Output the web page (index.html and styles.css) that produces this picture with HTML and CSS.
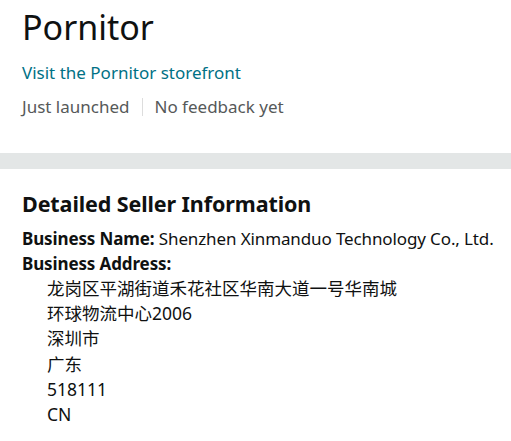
FILE: index.html
```html
<!DOCTYPE html>
<html>
<head>
<meta charset="utf-8">
<link rel="stylesheet" href="styles.css">
</head>
<body>
<section class="top">
  <h1 class="title">Pornitor</h1>
  <a class="store-link" href="#">Visit the Pornitor storefront</a>
  <div class="meta">
    <span>Just launched</span>
    <span class="sep"></span>
    <span>No feedback yet</span>
  </div>
</section>
<div class="band"></div>
<section class="details">
  <h2 class="heading">Detailed Seller Information</h2>
  <div class="row"><b>Business Name:</b> Shenzhen Xinmanduo Technology Co., Ltd.</div>
  <div class="row"><b>Business Address:</b></div>
  <div class="address">
    <div>龙岗区平湖街道禾花社区华南大道一号华南城</div>
    <div>环球物流中心2006</div>
    <div>深圳市</div>
    <div>广东</div>
    <div>518111</div>
    <div>CN</div>
  </div>
</section>
</body>
</html>
```
FILE: styles.css
```css
html, body {
  margin: 0;
  padding: 0;
  background: #fff;
}
body {
  font-family: "Noto Sans", "Noto Sans CJK SC", sans-serif;
  color: #0f1111;
}
.top {
  padding: 3px 22px 0;
  display: flex;
  flex-direction: column;
  align-items: flex-start;
}
.title {
  margin: 0;
  font-size: 34px;
  font-weight: 400;
  line-height: 48px;
}
.store-link {
  margin-top: 10px;
  color: #007185;
  text-decoration: none;
  font-size: 17px;
  line-height: 24px;
}
.meta {
  margin-top: 10px;
  display: flex;
  align-items: center;
  gap: 12px;
  color: #565959;
  font-size: 17px;
  line-height: 24px;
}
.sep {
  width: 1px;
  height: 18px;
  background: #dddddd;
}
.band {
  margin-top: 34px;
  height: 16px;
  background: #e3e6e6;
}
.details {
  padding: 19px 22px 0;
}
.heading {
  margin: 0 0 6px;
  font-size: 21.5px;
  font-weight: 700;
  line-height: 32px;
  letter-spacing: -0.1px;
}
.row {
  font-size: 17px;
  line-height: 25px;
  letter-spacing: -0.12px;
  white-space: nowrap;
}
.row b {
  font-weight: 700;
}
.address {
  padding-left: 25px;
  font-size: 17.5px;
  line-height: 25.2px;
}
```
